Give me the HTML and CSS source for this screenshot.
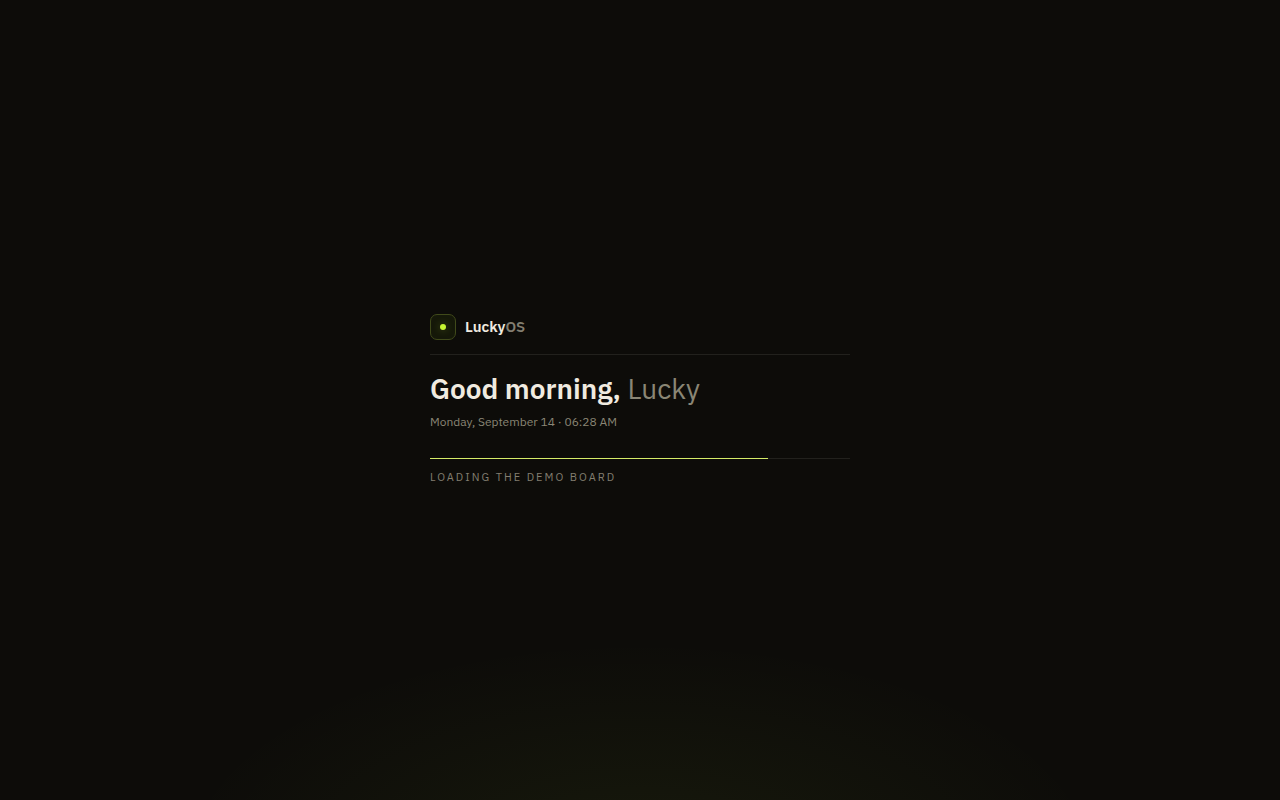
FILE: index.html
```html
<!DOCTYPE html>
<html lang="en">
<head>
<meta charset="utf-8">
<meta name="viewport" content="width=device-width, initial-scale=1">
<title>LuckyOS</title>
<link rel="stylesheet" href="styles.css">
</head>
<body class="boot">
<main class="panel">
  <header class="brand">
    <span class="mark"><span class="dot"></span></span>
    <span class="name">Lucky<span class="suffix">OS</span></span>
  </header>
  <h1 class="greeting">Good morning, <span class="who">Lucky</span></h1>
  <p class="date">Monday, September 14 · 06:28 AM</p>
  <progress class="bar" id="load" max="420" value="338"></progress>
  <label class="status" for="load">Loading the demo board</label>
</main>
</body>
</html>
```
FILE: styles.css
```css
* { box-sizing: border-box; margin: 0; }

.boot {
  min-height: 100vh;
  display: flex;
  align-items: center;
  justify-content: center;
  padding: 24px;
  background:
    radial-gradient(ellipse 52% 40% at 50% 108%, rgba(190, 242, 60, 0.06), transparent 70%) no-repeat,
    #0d0c09;
  color: #f0ebe0;
  font-family: "IBM Plex Sans", "Inter", sans-serif;
}

.panel {
  width: 100%;
  max-width: 420px;
  display: flex;
  flex-direction: column;
  padding-bottom: 1px;
}

.brand {
  display: flex;
  align-items: center;
  gap: 9px;
  padding-bottom: 14px;
  border-bottom: 1px solid #22211d;
}

.mark {
  width: 26px;
  height: 26px;
  display: flex;
  align-items: center;
  justify-content: center;
  border: 1px solid #404a1a;
  border-radius: 7px;
  background: #151809;
}

.dot {
  width: 6px;
  height: 6px;
  border-radius: 50%;
  background: #c6f432;
  box-shadow: 0 0 8px rgba(190, 242, 60, 0.3);
}

.name {
  font-size: 15px;
  line-height: 20px;
  font-weight: 600;
}

.suffix {
  color: #827e70;
}

.greeting {
  margin-top: 16px;
  font-size: 28px;
  line-height: 36px;
  font-weight: 600;
}

.who {
  color: #8a8675;
  font-weight: 400;
}

.date {
  margin-top: 7px;
  font-size: 12px;
  line-height: 16px;
  color: #8a8675;
}

.bar {
  appearance: none;
  display: block;
  width: 100%;
  height: 1px;
  margin-top: 28px;
  border: 0;
  background: #22211d;
}

.bar::-webkit-progress-bar { background: #22211d; }
.bar::-webkit-progress-value { background: #d5ec68; }

.status {
  margin-top: 10px;
  font-size: 11px;
  line-height: 16px;
  letter-spacing: 2px;
  text-transform: uppercase;
  color: #827e70;
}
```
